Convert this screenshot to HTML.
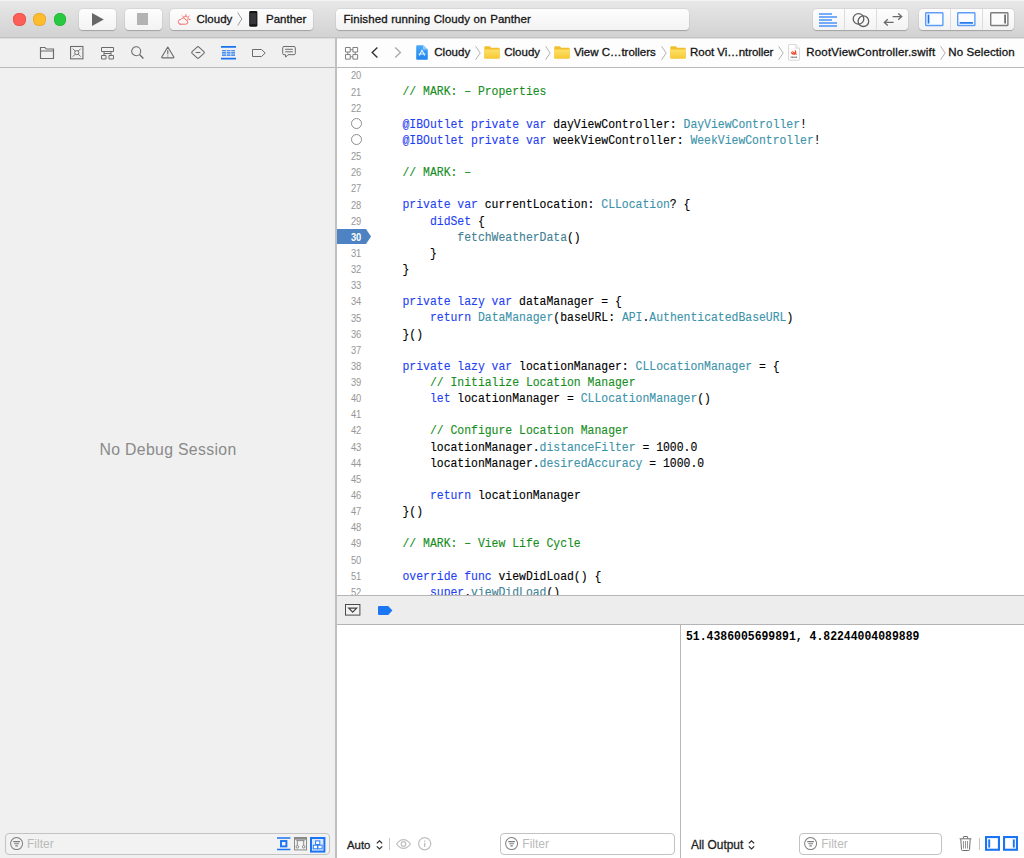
<!DOCTYPE html>
<html>
<head>
<meta charset="utf-8">
<title>Xcode</title>
<style>
*{box-sizing:border-box;margin:0;padding:0}
html,body{width:1024px;height:858px;overflow:hidden;background:#fff}
body{font-family:"Liberation Sans",sans-serif;font-size:13px;color:#1e1e1e;position:relative}
.abs{position:absolute}
svg{display:block;overflow:visible}
#titlebar{left:0;top:0;width:1024px;height:38px;background:linear-gradient(#e8e8e8,#d2d2d2);border-bottom:1px solid #c3c3c3;box-shadow:inset 0 1px 0 #f3f3f3}
.tl{position:absolute;top:13px;width:12.4px;height:12.4px;border-radius:50%}
.btn{position:absolute;top:8.5px;height:21.7px;background:linear-gradient(#fdfdfd,#f3f3f3);border-radius:4px;box-shadow:0 0.5px 1px rgba(0,0,0,.22),0 0 0 0.5px rgba(0,0,0,.06)}
.tt{position:absolute;font-size:11.5px;color:#141414;-webkit-text-stroke:0.3px;white-space:nowrap;line-height:16px}
#leftnav{left:0;top:38px;width:335px;height:30px;background:#f0f0f0;box-shadow:inset 0 1px 0 #dedede;border-bottom:1px solid #b9b9b9}
#left{left:0;top:68px;width:335px;height:790px;background:#f0f0f0}
#vsep{left:335px;top:38px;width:2px;height:820px;background:#c0c0c0}
#jump{left:336px;top:38px;width:688px;height:30px;background:#fdfdfd;box-shadow:inset 0 1px 0 #e2e2e2;border-bottom:1px solid #b9b9b9}
#editor{left:336px;top:68px;width:688px;height:528px;background:#fff;overflow:hidden}
#dbgbar{left:336px;top:595px;width:688px;height:30px;background:#ededed;border-top:1px solid #b6b6b6;border-bottom:1px solid #b4b4b4}
#console{left:336px;top:625px;width:688px;height:233px;background:#fff}
#csep{left:680px;top:625px;width:1px;height:233px;background:#b8b8b8}
.ln{position:absolute;left:0;width:25.3px;text-align:right;font-size:10.4px;color:#969696;line-height:16px;transform:scaleX(0.9);transform-origin:100% 11.4px}
.cl{position:absolute;left:66.5px;font-family:"Liberation Mono",monospace;font-size:11.43px;line-height:16px;white-space:pre;color:#000;transform:scaleY(1.13);transform-origin:0 11.07px;-webkit-text-stroke:0.12px}
.k{color:#1f3ff2}.c{color:#168e1c}.t{color:#3c93aa}.m{color:#3f8195}
.flt{position:absolute;height:21px;border:1px solid #c2c2c2;border-radius:4px;background:#fff}
.flt span{position:absolute;left:21px;top:2.7px;font-size:12px;line-height:15px;color:#bbbbbb}
.jt{position:absolute;top:6px;font-size:11.5px;line-height:16px;color:#141414;-webkit-text-stroke:0.3px;white-space:nowrap}
</style>
</head>
<body>
<div id="titlebar" class="abs">
<div class="tl" style="left:13.2px;top:13.2px;background:#fc5f57;box-shadow:inset 0 0 0 0.5px #e2463f"></div>
<div class="tl" style="left:33.4px;top:13.2px;background:#fdbc2e;box-shadow:inset 0 0 0 0.5px #dfa023"></div>
<div class="tl" style="left:53.55px;top:13.2px;background:#28c840;box-shadow:inset 0 0 0 0.5px #1dad2b"></div>
<div class="btn" style="left:79px;width:37px"><svg class="abs" style="left:13px;top:4.5px" width="12" height="13" viewBox="0 0 12 13"><path d="M0 0L11.8 6.5L0 13Z" fill="#676767"/></svg></div>
<div class="btn" style="left:124.5px;width:37.5px"><div class="abs" style="left:12.2px;top:4.9px;width:11.8px;height:11.8px;background:#b3b3b3"></div></div>
<div class="btn" style="left:170px;width:143px">
<svg class="abs" style="left:6.9px;top:5.3px" width="13" height="11" viewBox="0 0 13 11"><g fill="none" stroke="#f4706a" stroke-width="1" stroke-linecap="round"><path d="M3.2 10.2H8.6A2.1 2.1 0 0 0 8.8 6A2.6 2.6 0 0 0 3.9 5.6A2.3 2.3 0 0 0 3.2 10.2Z"/><path d="M6.6 3.6A2.4 2.4 0 0 1 11 5.6"/><path d="M8.9 1.6V0.6M11.6 2.6L12.3 1.9M6.2 2.6L5.5 1.9M12.3 5.4H13"/></g></svg>
<div class="tt" style="left:26.5px;top:2.9px">Cloudy</div>
<svg class="abs" style="left:67px;top:3.5px" width="6" height="14" viewBox="0 0 6 14"><path d="M0.7 0.5L4.8 7L0.7 13.5" fill="none" stroke="#9a9a9a" stroke-width="1"/></svg>
<svg class="abs" style="left:79.3px;top:2.7px" width="8.6" height="15.8" viewBox="0 0 9 15" preserveAspectRatio="none"><rect x="0.2" y="0" width="8.6" height="15" rx="1.4" fill="#161616"/><rect x="1.3" y="2" width="6.4" height="10.6" fill="#36373a"/></svg>
<div class="tt" style="left:96px;top:2.9px">Panther</div>
</div>
<div class="btn" style="left:336px;width:353px;border-radius:4px"><div class="tt" style="left:7.5px;top:2.9px;letter-spacing:0.08px;word-spacing:0.32px">Finished running Cloudy on Panther</div></div>
<div class="btn" style="left:812.5px;width:95px">
<div class="abs" style="left:31px;top:0;width:1px;height:21.7px;background:#dcdcdc"></div>
<div class="abs" style="left:63px;top:0;width:1px;height:21.7px;background:#dcdcdc"></div>
<svg class="abs" style="left:6.4px;top:4.2px" width="18" height="14" viewBox="0 0 18 14"><path d="M0 0.9H13M0 3.95H18M0 7H13M0 10.05H18M0 13.1H18" stroke="#4a92f7" stroke-width="1.5"/></svg>
<svg class="abs" style="left:39.5px;top:4px" width="18" height="14" viewBox="0 0 18 14"><circle cx="6.5" cy="5.9" r="5.3" fill="none" stroke="#5e5e5e" stroke-width="1.3"/><circle cx="11.4" cy="8.2" r="5.3" fill="none" stroke="#5e5e5e" stroke-width="1.3"/></svg>
<svg class="abs" style="left:71px;top:4.5px" width="18" height="13" viewBox="0 0 18 13"><path d="M8.6 3.6H17.5M14.2 0.4L17.7 3.6L14.2 6.8M9.6 9.4H0.5M3.8 6.2L0.3 9.4L3.8 12.6" fill="none" stroke="#6a6a6a" stroke-width="1.3"/></svg>
</div>
<div class="btn" style="left:919px;width:95.3px">
<div class="abs" style="left:31px;top:0;width:1px;height:21.7px;background:#dcdcdc"></div>
<div class="abs" style="left:63px;top:0;width:1px;height:21.7px;background:#dcdcdc"></div>
<svg class="abs" style="left:6.1px;top:3.5px" width="18.6" height="14.2" viewBox="0 0 18.6 14.2"><rect x="0.7" y="0.7" width="17.2" height="12.8" rx="0.8" fill="#fbfcff" stroke="#5d9df8" stroke-width="1.4"/><path d="M3.5 2.6V11.6" stroke="#1a72f3" stroke-width="1.7"/></svg>
<svg class="abs" style="left:38.4px;top:3.5px" width="18.6" height="14.2" viewBox="0 0 18.6 14.2"><rect x="0.7" y="0.7" width="17.2" height="12.8" rx="0.8" fill="#fbfcff" stroke="#5d9df8" stroke-width="1.4"/><path d="M2.6 10.9H16" stroke="#1a72f3" stroke-width="1.7"/></svg>
<svg class="abs" style="left:70.9px;top:3.5px" width="18.6" height="14.2" viewBox="0 0 18.6 14.2"><rect x="0.7" y="0.7" width="17.2" height="12.8" rx="0.8" fill="#fcfcfc" stroke="#7e7e7e" stroke-width="1.4"/><path d="M15.1 2.6V11.6" stroke="#666" stroke-width="1.7"/></svg>
</div>
</div>
<div id="leftnav" class="abs">
<svg class="abs" style="left:39.5px;top:9px" width="14" height="12" viewBox="0 0 14 12"><path d="M0.5 11.5V0.5H5L6.2 2H13.5V11.5Z M0.5 4H13.5" fill="none" stroke="#6c6c6c" stroke-width="1.15"/></svg>
<svg class="abs" style="left:70.2px;top:7.9px" width="13.5" height="13.3" viewBox="0 0 14 14"><rect x="0.5" y="0.5" width="13" height="13" fill="none" stroke="#6c6c6c" stroke-width="1.15"/><circle cx="7" cy="7" r="2.2" fill="none" stroke="#6c6c6c"/><path d="M2.8 2.8L5.4 5.4M11.2 2.8L8.6 5.4M2.8 11.2L5.4 8.6M11.2 11.2L8.6 8.6" stroke="#6c6c6c"/></svg>
<svg class="abs" style="left:100px;top:9px" width="15" height="13" viewBox="0 0 15 13"><path d="M1.5 0.5H13.5V4.5H1.5Z M4 4.5V8.5M11 4.5V8.5M4 6.5H11 M1.5 8.5H6V12H1.5Z M9 8.5H13.5V12H9Z" fill="none" stroke="#6c6c6c" stroke-width="1"/></svg>
<svg class="abs" style="left:130.5px;top:8px" width="13" height="13" viewBox="0 0 13 13"><circle cx="5.2" cy="5.2" r="4.5" fill="none" stroke="#6c6c6c" stroke-width="1.1"/><path d="M8.5 8.5L12.4 12.4" stroke="#6c6c6c" stroke-width="1.4"/></svg>
<svg class="abs" style="left:161px;top:7.9px" width="13.6" height="13" viewBox="0 0 14 13"><path d="M7 0.9L13.2 11.2Q13.4 12 12.6 12H1.4Q0.6 12 0.8 11.2Z" fill="none" stroke="#6c6c6c" stroke-width="1.2" stroke-linejoin="round"/><path d="M7 4.2V8.4M7 9.5V10.7" stroke="#6c6c6c" stroke-width="1.2"/></svg>
<svg class="abs" style="left:191.3px;top:7.9px" width="14" height="13" viewBox="0 0 14 13"><path d="M6.1 1.1Q7 0.3 7.9 1.1L12.9 5.7Q13.7 6.5 12.9 7.3L7.9 11.9Q7 12.7 6.1 11.9L1.1 7.3Q0.3 6.5 1.1 5.7Z" fill="none" stroke="#6c6c6c" stroke-width="1.15" stroke-linejoin="round"/><path d="M4.6 6.5H9.4" stroke="#6c6c6c" stroke-width="1.1"/></svg>
<svg class="abs" style="left:221px;top:7.8px" width="15" height="14" viewBox="0 0 15 14"><path d="M0 0.9H15M0 12.6H15" stroke="#1a72f3" stroke-width="1.8"/><path d="M1 4.7H5M5.7 4.7H9.5M10.2 4.7H14M1 6.9H5M5.7 6.9H9.5M10.2 6.9H14M1 9.1H5M5.7 9.1H9.5M10.2 9.1H14" stroke="#1a72f3" stroke-width="1.1"/></svg>
<svg class="abs" style="left:252px;top:11px" width="14" height="8" viewBox="0 0 14 8"><path d="M0.5 0.5H9.5L13.2 4L9.5 7.5H0.5Z" fill="none" stroke="#6c6c6c" stroke-width="1" stroke-linejoin="round"/></svg>
<svg class="abs" style="left:281.9px;top:8px" width="14" height="12" viewBox="0 0 14 12"><path d="M2 0.5H12Q13.3 0.5 13.3 1.8V7.4Q13.3 8.7 12 8.7H6L3.6 11.2V8.7H2Q0.7 8.7 0.7 7.4V1.8Q0.7 0.5 2 0.5Z" fill="none" stroke="#6c6c6c" stroke-width="1" stroke-linejoin="round"/><path d="M3.2 3.3H10.8M3.2 5.8H10.8" stroke="#6c6c6c" stroke-width="1"/></svg>
</div>
<div id="left" class="abs"><div class="abs" style="left:0.5px;top:371.6px;width:335px;text-align:center;font-size:15.8px;letter-spacing:0.34px;color:#8a8a8a;line-height:20px">No Debug Session</div>
</div>
<div id="jump" class="abs">
<svg width="0" height="0" style="position:absolute"><defs><linearGradient id="fg" x1="0" y1="0" x2="0" y2="1"><stop offset="0" stop-color="#fde068"/><stop offset="1" stop-color="#f7c936"/></linearGradient><linearGradient id="pg" x1="0" y1="0" x2="0" y2="1"><stop offset="0" stop-color="#4aaaf9"/><stop offset="1" stop-color="#1f84ee"/></linearGradient></defs></svg>
<svg class="abs" style="left:8.6px;top:9px" width="13.3" height="12.6" viewBox="0 0 14 13" preserveAspectRatio="none"><path d="M0.5 0.5H5.5V5.2H0.5Z M8.3 0.5H13.3V5.2H8.3Z M0.5 7.8H5.5V12.5H0.5Z M8.3 7.8H13.3V12.5H8.3Z M5.5 2.8H8.3 M5.5 10.1H8.3 M3 5.2V7.8 M10.8 5.2V7.8" fill="none" stroke="#7a7a7a" stroke-width="1"/></svg>
<svg class="abs" style="left:35.4px;top:9.4px" width="8" height="12" viewBox="0 0 8 12"><path d="M6.4 0.6L1.2 5.5L6.4 10.4" fill="none" stroke="#333" stroke-width="1.4"/></svg>
<svg class="abs" style="left:57.7px;top:9.4px" width="8" height="12" viewBox="0 0 8 12"><path d="M1.2 0.6L6.4 5.5L1.2 10.4" fill="none" stroke="#ababab" stroke-width="1.4"/></svg>
<svg class="abs" style="left:80.2px;top:7px" width="12" height="15" viewBox="0 0 12 15"><path d="M0.2 1.2Q0.2 0.2 1.2 0.2H7.4V4.2H11.8V13.8Q11.8 14.8 10.8 14.8H1.2Q0.2 14.8 0.2 13.8Z" fill="url(#pg)"/><path d="M7.4 0.2L11.8 4.2H7.4Z" fill="#8cc8fb"/><path d="M3.3 10.6L6 5.2L8.7 10.6M2.6 9H9.4" fill="none" stroke="#e4f2fe" stroke-width="1.1"/></svg>
<svg class="abs" style="left:452px;top:5.9px" width="12" height="17" viewBox="0 0 12 17"><path d="M0.5 1Q0.5 0.5 1 0.5H7.8L11.5 4.2V15.7Q11.5 16.2 11 16.2H1Q0.5 16.2 0.5 15.7Z" fill="#fff" stroke="#d4d4d4" stroke-width="0.9"/><path d="M7.8 0.5V4.2H11.5" fill="#f6f6f6" stroke="#d4d4d4" stroke-width="0.8"/><path d="M2.8 7.4Q4.2 8.6 5.6 9.2Q4.2 7.8 3.6 6.2Q5 7.6 6.8 8.6Q7.4 7 6.4 5.6Q9 7.2 8.2 9.8Q9 10.6 8.8 11.2Q8 10.4 7 10.7Q4.6 11.4 2.8 9Q3.4 9 2.8 7.4Z" fill="#f24b35"/><path d="M2.6 13.2H9.2" stroke="#8a8a8a" stroke-width="1.6" stroke-dasharray="1.1 0.25"/></svg>
<div class="jt" style="left:98.25px;letter-spacing:0.023px">Cloudy</div>
<div class="jt" style="left:168.20px;letter-spacing:0.015px">Cloudy</div>
<div class="jt" style="left:237.90px;letter-spacing:-0.026px">View C&#8230;trollers</div>
<div class="jt" style="left:354.10px;letter-spacing:-0.054px">Root Vi&#8230;ntroller</div>
<div class="jt" style="left:470.20px;letter-spacing:0.198px">RootViewController.swift</div>
<div class="jt" style="left:612.30px;letter-spacing:0.103px">No Selection</div>
<svg class="abs" style="left:138.70px;top:8px" width="6" height="14" viewBox="0 0 6 14"><path d="M0.6 0.3L5.2 7L0.6 13.7" fill="none" stroke="#a9a9a9" stroke-width="0.9"/></svg>
<svg class="abs" style="left:208.70px;top:8px" width="6" height="14" viewBox="0 0 6 14"><path d="M0.6 0.3L5.2 7L0.6 13.7" fill="none" stroke="#a9a9a9" stroke-width="0.9"/></svg>
<svg class="abs" style="left:325.00px;top:8px" width="6" height="14" viewBox="0 0 6 14"><path d="M0.6 0.3L5.2 7L0.6 13.7" fill="none" stroke="#a9a9a9" stroke-width="0.9"/></svg>
<svg class="abs" style="left:441.50px;top:8px" width="6" height="14" viewBox="0 0 6 14"><path d="M0.6 0.3L5.2 7L0.6 13.7" fill="none" stroke="#a9a9a9" stroke-width="0.9"/></svg>
<svg class="abs" style="left:603.80px;top:8px" width="6" height="14" viewBox="0 0 6 14"><path d="M0.6 0.3L5.2 7L0.6 13.7" fill="none" stroke="#a9a9a9" stroke-width="0.9"/></svg>
<svg class="abs" style="left:148.20px;top:7.8px" width="16" height="13" viewBox="0 0 16 13"><path d="M0.3 1.2Q0.3 0.2 1.3 0.2H5.4Q6 0.2 6.4 0.7L7.2 1.7H14.7Q15.7 1.7 15.7 2.7V11.4Q15.7 12.4 14.7 12.4H1.3Q0.3 12.4 0.3 11.4Z" fill="#f1be2d"/><path d="M0.3 3.6H15.7V11.4Q15.7 12.4 14.7 12.4H1.3Q0.3 12.4 0.3 11.4Z" fill="url(#fg)"/></svg>
<svg class="abs" style="left:218.00px;top:7.8px" width="16" height="13" viewBox="0 0 16 13"><path d="M0.3 1.2Q0.3 0.2 1.3 0.2H5.4Q6 0.2 6.4 0.7L7.2 1.7H14.7Q15.7 1.7 15.7 2.7V11.4Q15.7 12.4 14.7 12.4H1.3Q0.3 12.4 0.3 11.4Z" fill="#f1be2d"/><path d="M0.3 3.6H15.7V11.4Q15.7 12.4 14.7 12.4H1.3Q0.3 12.4 0.3 11.4Z" fill="url(#fg)"/></svg>
<svg class="abs" style="left:334.20px;top:7.8px" width="16" height="13" viewBox="0 0 16 13"><path d="M0.3 1.2Q0.3 0.2 1.3 0.2H5.4Q6 0.2 6.4 0.7L7.2 1.7H14.7Q15.7 1.7 15.7 2.7V11.4Q15.7 12.4 14.7 12.4H1.3Q0.3 12.4 0.3 11.4Z" fill="#f1be2d"/><path d="M0.3 3.6H15.7V11.4Q15.7 12.4 14.7 12.4H1.3Q0.3 12.4 0.3 11.4Z" fill="url(#fg)"/></svg>
</div>
<div id="editor" class="abs"><div class="ln" style="top:0.40px">20</div>
<div class="ln" style="top:16.54px">21</div>
<div class="cl" style="top:16.47px"><span class="c">// MARK: &#8211; Properties</span></div>
<div class="ln" style="top:32.68px">22</div>
<div class="abs" style="left:15px;top:49.82px;width:11px;height:11px;border:1px solid #8e8e8e;border-radius:50%"></div>
<div class="cl" style="top:48.75px"><span class="k">@IBOutlet private var</span> dayViewController: <span class="t">DayViewController</span>!</div>
<div class="abs" style="left:15px;top:65.96px;width:11px;height:11px;border:1px solid #8e8e8e;border-radius:50%"></div>
<div class="cl" style="top:64.89px"><span class="k">@IBOutlet private var</span> weekViewController: <span class="t">WeekViewController</span>!</div>
<div class="ln" style="top:81.10px">25</div>
<div class="ln" style="top:97.24px">26</div>
<div class="cl" style="top:97.17px"><span class="c">// MARK: &#8211;</span></div>
<div class="ln" style="top:113.38px">27</div>
<div class="ln" style="top:129.52px">28</div>
<div class="cl" style="top:129.45px"><span class="k">private var</span> currentLocation: <span class="t">CLLocation</span>? {</div>
<div class="ln" style="top:145.66px">29</div>
<div class="cl" style="top:145.59px">    <span class="k">didSet</span> {</div>
<svg class="abs" style="left:0;top:161.00px" width="36" height="15" viewBox="0 0 36 15"><path d="M0 0H30L35 7.5L30 15H0Z" fill="#4d82c3"/></svg>
<div class="ln" style="top:161.80px;color:#fff;font-weight:bold">30</div>
<div class="cl" style="top:161.73px">        <span class="m">fetchWeatherData</span>()</div>
<div class="ln" style="top:177.94px">31</div>
<div class="cl" style="top:177.87px">    }</div>
<div class="ln" style="top:194.08px">32</div>
<div class="cl" style="top:194.01px">}</div>
<div class="ln" style="top:210.22px">33</div>
<div class="ln" style="top:226.36px">34</div>
<div class="cl" style="top:226.29px"><span class="k">private lazy var</span> dataManager = {</div>
<div class="ln" style="top:242.50px">35</div>
<div class="cl" style="top:242.43px">    <span class="k">return</span> <span class="t">DataManager</span>(baseURL: <span class="t">API</span>.<span class="t">AuthenticatedBaseURL</span>)</div>
<div class="ln" style="top:258.64px">36</div>
<div class="cl" style="top:258.57px">}()</div>
<div class="ln" style="top:274.78px">37</div>
<div class="ln" style="top:290.92px">38</div>
<div class="cl" style="top:290.85px"><span class="k">private lazy var</span> locationManager: <span class="t">CLLocationManager</span> = {</div>
<div class="ln" style="top:307.06px">39</div>
<div class="cl" style="top:306.99px">    <span class="c">// Initialize Location Manager</span></div>
<div class="ln" style="top:323.20px">40</div>
<div class="cl" style="top:323.13px">    <span class="k">let</span> locationManager = <span class="t">CLLocationManager</span>()</div>
<div class="ln" style="top:339.34px">41</div>
<div class="ln" style="top:355.48px">42</div>
<div class="cl" style="top:355.41px">    <span class="c">// Configure Location Manager</span></div>
<div class="ln" style="top:371.62px">43</div>
<div class="cl" style="top:371.55px">    locationManager.<span class="t">distanceFilter</span> = 1000.0</div>
<div class="ln" style="top:387.76px">44</div>
<div class="cl" style="top:387.69px">    locationManager.<span class="t">desiredAccuracy</span> = 1000.0</div>
<div class="ln" style="top:403.90px">45</div>
<div class="ln" style="top:420.04px">46</div>
<div class="cl" style="top:419.97px">    <span class="k">return</span> locationManager</div>
<div class="ln" style="top:436.18px">47</div>
<div class="cl" style="top:436.11px">}()</div>
<div class="ln" style="top:452.32px">48</div>
<div class="ln" style="top:468.46px">49</div>
<div class="cl" style="top:468.39px"><span class="c">// MARK: &#8211; View Life Cycle</span></div>
<div class="ln" style="top:484.60px">50</div>
<div class="ln" style="top:500.74px">51</div>
<div class="cl" style="top:500.67px"><span class="k">override func</span> viewDidLoad() {</div>
<div class="ln" style="top:516.88px">52</div>
<div class="cl" style="top:516.81px">    <span class="k">super</span>.<span class="m">viewDidLoad</span>()</div></div>
<div id="dbgbar" class="abs">
<svg class="abs" style="left:9px;top:8.4px" width="16" height="12" viewBox="0 0 16 12"><rect x="0.5" y="0.5" width="14.4" height="10.6" fill="#f2f2f2" stroke="#4a4a4a" stroke-width="1"/><path d="M3.8 4.2H11.6L7.7 8.2Z" fill="none" stroke="#444" stroke-width="1.25"/></svg>
<svg class="abs" style="left:41.6px;top:9.6px" width="15" height="10" viewBox="0 0 15 10"><path d="M1 0H10.2L14.4 4.45L10.2 8.9H1Q0 8.9 0 7.9V1Q0 0 1 0Z" fill="#1a76f2"/></svg>
</div>
<div id="console" class="abs">
<div class="abs" style="left:350px;top:4.2px;font-family:'Liberation Mono',monospace;font-weight:bold;font-size:11.45px;line-height:16px;white-space:pre;color:#000;transform:scaleY(1.13);transform-origin:0 11.07px">51.4386005699891, 4.82244004089889</div>
</div>

<!-- left filter -->
<div class="flt" style="left:5px;top:833px;width:324.7px;height:21.7px;background:#f2f2f2;border-color:#c3c3c3">
<svg class="abs" style="left:3.6px;top:3.3px" width="13.2" height="13.2" viewBox="0 0 13 13"><circle cx="6.5" cy="6.5" r="5.9" fill="none" stroke="#7c7c7c" stroke-width="1"/><path d="M3.2 4.6H9.8M4.2 6.7H8.8M5.3 8.8H7.7" stroke="#7c7c7c" stroke-width="1.1"/></svg>
<span>Filter</span>
<svg class="abs" style="left:270.9px;top:2.9px" width="14" height="14" viewBox="0 0 14 14"><path d="M0 1.1H13.4M0 12.5H13.4" stroke="#1b74f3" stroke-width="1.5"/><rect x="4" y="4" width="5.4" height="5.4" fill="#eef4fe" stroke="#1b74f3" stroke-width="1.9"/></svg>
<svg class="abs" style="left:288.2px;top:3px" width="13" height="14" viewBox="0 0 13 14"><rect x="0.5" y="0.5" width="12" height="12.4" fill="#f3f3f3" stroke="#8a8a8a" stroke-width="1"/><path d="M1 1.7H12" stroke="#8a8a8a" stroke-width="2"/><path d="M2.4 3.6H10.6M3.3 3.6V8.4M9.7 3.6V8.4" stroke="#808080" stroke-width="0.9" fill="none"/><circle cx="3.3" cy="9.8" r="1.3" fill="none" stroke="#808080" stroke-width="0.9"/><circle cx="9.7" cy="9.8" r="1.3" fill="none" stroke="#808080" stroke-width="0.9"/></svg>
<svg class="abs" style="left:304px;top:2.7px" width="16" height="16" viewBox="0 0 16 16"><rect x="1" y="1" width="13.4" height="13.6" fill="#dce8fd" stroke="#1b74f3" stroke-width="2"/><rect x="5.6" y="3.9" width="4.2" height="3.6" fill="#fff" stroke="#2a7df5" stroke-width="1"/><rect x="3.3" y="8.2" width="4.2" height="3.6" fill="#fff" stroke="#2a7df5" stroke-width="1"/><rect x="7.9" y="8.2" width="4.2" height="3.6" fill="#fff" stroke="#2a7df5" stroke-width="1"/></svg>
</div>
<!-- variables view bar -->
<div class="tt" style="left:347px;top:836.6px;font-size:11.4px;color:#1e1e1e">Auto</div>
<svg class="abs" style="left:375.6px;top:839.6px" width="7" height="10" viewBox="0 0 7 10"><path d="M0.8 3.4L3.5 0.8L6.2 3.4M0.8 6.4L3.5 9L6.2 6.4" fill="none" stroke="#2a2a2a" stroke-width="1.2"/></svg>
<div class="abs" style="left:389px;top:837.5px;width:1px;height:12.5px;background:#c6c6c6"></div>
<svg class="abs" style="left:396px;top:839px" width="15" height="10" viewBox="0 0 15 10"><path d="M0.6 5Q3.6 0.6 7.5 0.6Q11.4 0.6 14.4 5Q11.4 9.4 7.5 9.4Q3.6 9.4 0.6 5Z" fill="none" stroke="#c0c0c0" stroke-width="1.25"/><circle cx="7.5" cy="5" r="2.3" fill="none" stroke="#c0c0c0" stroke-width="1.25"/></svg>
<svg class="abs" style="left:418.2px;top:837.4px" width="13.4" height="13.4" viewBox="0 0 13 13"><circle cx="6.5" cy="6.5" r="5.9" fill="none" stroke="#c0c0c0" stroke-width="1.25"/><path d="M6.5 5.6V9.6M6.5 3.3V4.5" stroke="#c0c0c0" stroke-width="1.3"/></svg>
<div class="flt" style="left:500.3px;top:833.1px;width:174.4px;height:21.5px">
<svg class="abs" style="left:3.6px;top:3.3px" width="13.2" height="13.2" viewBox="0 0 13 13"><circle cx="6.5" cy="6.5" r="5.9" fill="none" stroke="#7c7c7c" stroke-width="1"/><path d="M3.2 4.6H9.8M4.2 6.7H8.8M5.3 8.8H7.7" stroke="#7c7c7c" stroke-width="1.1"/></svg>
<span>Filter</span></div>
<!-- console bar -->
<div class="tt" style="left:691px;top:836.6px;font-size:11.9px;color:#1e1e1e">All Output</div>
<svg class="abs" style="left:747.8px;top:839.6px" width="7" height="10" viewBox="0 0 7 10"><path d="M0.8 3.4L3.5 0.8L6.2 3.4M0.8 6.4L3.5 9L6.2 6.4" fill="none" stroke="#2a2a2a" stroke-width="1.2"/></svg>
<div class="flt" style="left:799.2px;top:833.1px;width:142.7px;height:21.5px">
<svg class="abs" style="left:3.6px;top:3.3px" width="13.2" height="13.2" viewBox="0 0 13 13"><circle cx="6.5" cy="6.5" r="5.9" fill="none" stroke="#7c7c7c" stroke-width="1"/><path d="M3.2 4.6H9.8M4.2 6.7H8.8M5.3 8.8H7.7" stroke="#7c7c7c" stroke-width="1.1"/></svg>
<span>Filter</span></div>
<svg class="abs" style="left:959px;top:836px" width="13" height="15" viewBox="0 0 13 15"><path d="M0.6 2.8H12.4M4.4 2.6V1Q4.4 0.5 4.9 0.5H8.1Q8.6 0.5 8.6 1V2.6M1.8 3L2.5 13.6Q2.6 14.5 3.4 14.5H9.6Q10.4 14.5 10.5 13.6L11.2 3" fill="none" stroke="#6e6e6e" stroke-width="1"/><path d="M4.5 5V12.6M6.5 5V12.6M8.5 5V12.6" stroke="#8a8a8a" stroke-width="0.9"/></svg>
<div class="abs" style="left:979px;top:837.5px;width:1px;height:12.5px;background:#c6c6c6"></div>
<svg class="abs" style="left:984.9px;top:835.8px" width="15" height="14.8" viewBox="0 0 15 14.8"><rect x="1.05" y="1.05" width="12.9" height="12.7" fill="#fff" stroke="#1b74f3" stroke-width="2.1"/><path d="M4.2 3.4V11.6" stroke="#1b74f3" stroke-width="1.9"/></svg>
<svg class="abs" style="left:1003.3px;top:835.8px" width="15" height="14.8" viewBox="0 0 15 14.8"><rect x="1.05" y="1.05" width="12.9" height="12.7" fill="#fff" stroke="#1b74f3" stroke-width="2.1"/><path d="M10.8 3.4V11.6" stroke="#1b74f3" stroke-width="1.9"/></svg>
<div id="csep" class="abs"></div>
<div id="vsep" class="abs"></div>
</body>
</html>
